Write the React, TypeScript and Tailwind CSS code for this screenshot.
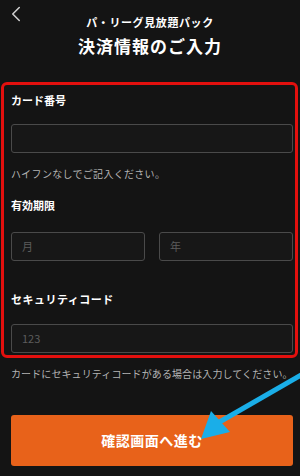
import { ChevronLeft } from "lucide-react";

const font = { fontFamily: '"Noto Sans CJK JP", "Noto Sans", sans-serif' };

function Field({ placeholder }: { placeholder?: string }) {
  return (
    <div className="flex h-[29px] items-center rounded-[3px] border border-[#4a4a4a] bg-[#171717] pl-[10px] text-[11px] text-[#5c5c5c]">
      {placeholder}
    </div>
  );
}

export default function App() {
  return (
    <div className="relative h-[476px] w-[300px] overflow-hidden bg-[#141414] text-white" style={font}>
      {/* header */}
      <div className="relative flex flex-col items-center pt-[14px]">
        <ChevronLeft className="absolute left-[3px] top-[1px] text-[#d0d0d0]" size={26} strokeWidth={1.4} />
        <p className="text-[11px] font-bold leading-[16px] tracking-[0.6px]">パ・リーグ見放題パック</p>
        <h1 className="mt-[4px] text-[17px] font-bold leading-[24px] tracking-[1px]">決済情報のご入力</h1>
      </div>

      {/* form, with the red annotation frame */}
      <div className="ml-[1px] mr-[2px] mt-[24px] rounded-[6px] border-[3px] border-[#e3100e] pb-[2px] pl-[7px] pr-[2px] pt-[8px]">
        <p className="text-[11px] font-bold leading-[14px]">カード番号</p>
        <div className="mt-[17px]">
          <Field />
        </div>
        <p className="mt-[15px] text-[10px] leading-[12px] text-[#b3b3b3] tracking-[0.3px]">ハイフンなしでご記入ください。</p>

        <p className="mt-[18px] text-[11px] font-bold leading-[14px]">有効期限</p>
        <div className="mt-[20px] grid grid-cols-2 gap-[14px]">
          <Field placeholder="月" />
          <Field placeholder="年" />
        </div>

        <p className="mt-[31px] text-[11px] font-bold leading-[14px] tracking-[0.5px]">セキュリティコード</p>
        <div className="mt-[18px]">
          <Field placeholder="123" />
        </div>
      </div>

      <p className="mt-[10px] pl-[11px] text-[10px] leading-[12px] text-[#b3b3b3] tracking-[0.1px]">
        カードにセキュリティコードがある場合は入力してください。
      </p>

      <div className="ml-[11px] mr-[7px] mt-[35px]">
        <button className="flex h-[51px] w-full items-center justify-center rounded-[3px] bg-[#e8621a] text-[14px] font-bold tracking-[0.5px] text-white">
          確認画面へ進む
        </button>
      </div>

      {/* blue annotation arrow */}
      <svg className="pointer-events-none absolute inset-0" width="300" height="476" viewBox="0 0 300 476">
        <line x1="303" y1="374" x2="216" y2="424" stroke="#1aaee8" strokeWidth="5" />
        <polygon points="201,439 211,411 230,432" fill="#1aaee8" />
      </svg>
    </div>
  );
}
